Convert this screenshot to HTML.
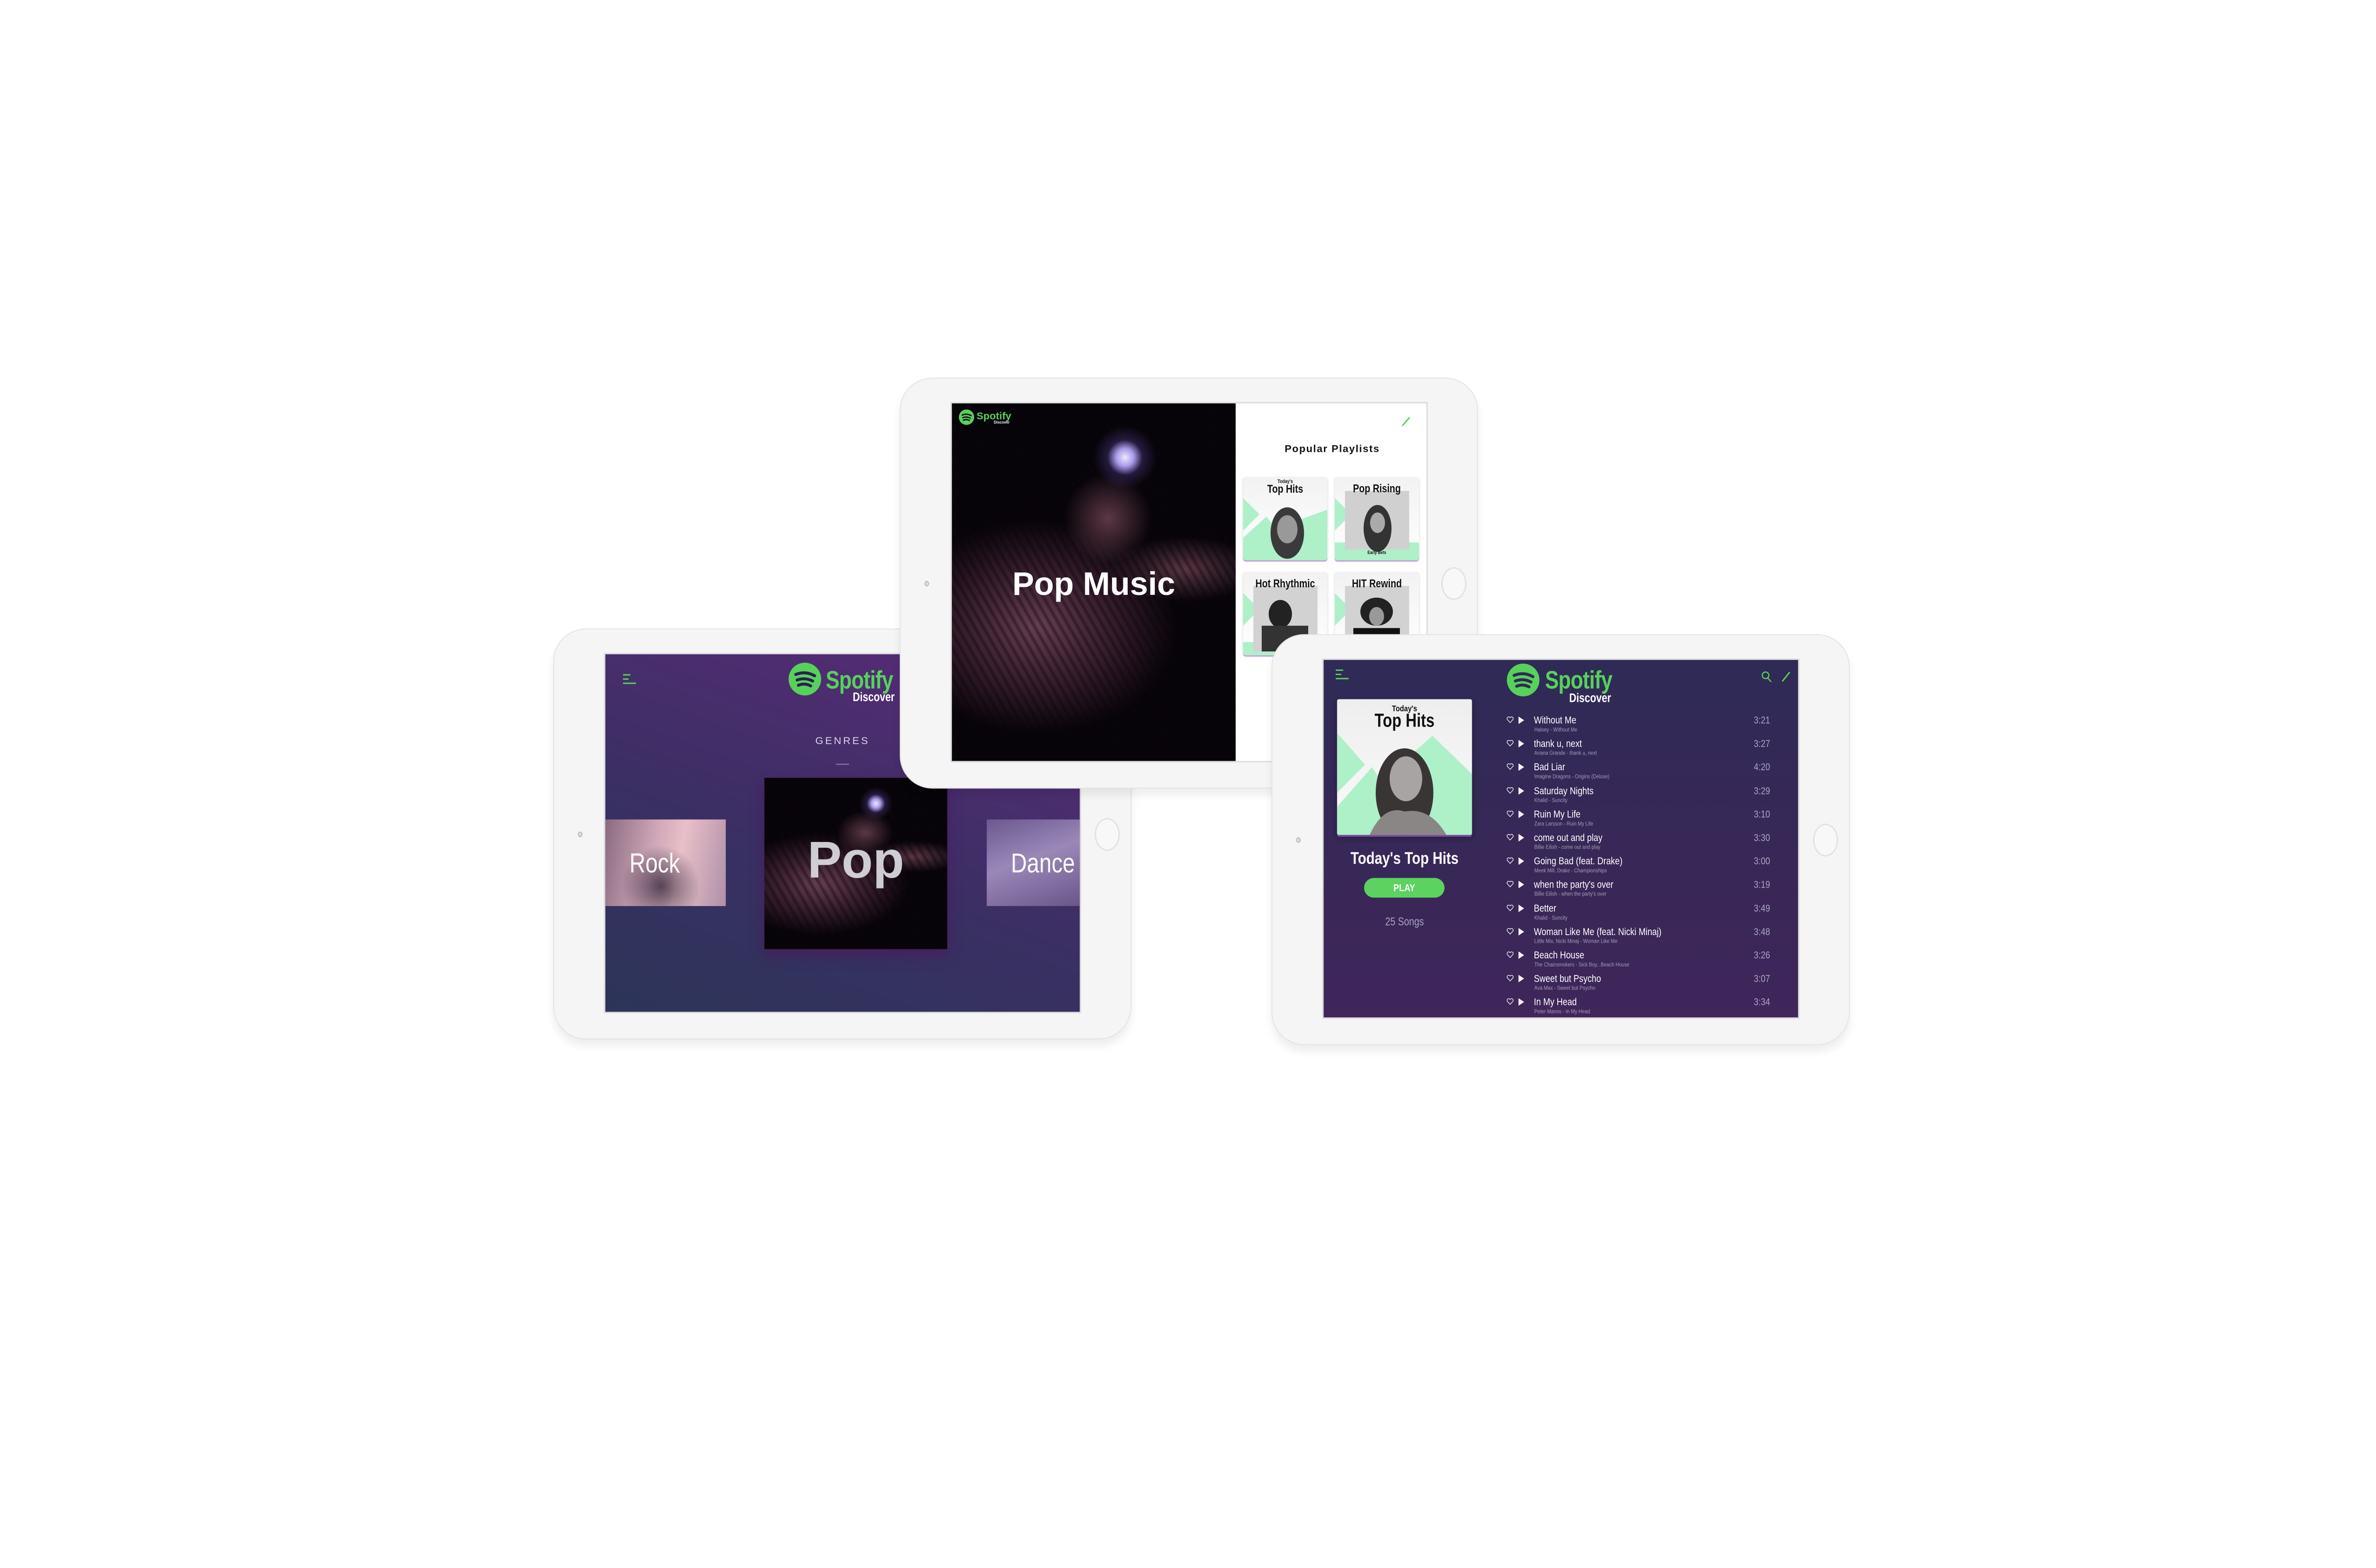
<!DOCTYPE html>
<html><head><meta charset="utf-8"><style>
*{margin:0;padding:0;box-sizing:border-box}
body{width:5100px;height:3300px;background:#fff;position:relative;overflow:hidden;font-family:"Liberation Sans",sans-serif}
#wrap{position:absolute;left:0;top:0;width:5100px;height:3300px;transform-origin:0 0;transform:translate(3px,-6px) scale(0.979,0.985)}
.ipad{position:absolute;width:1243px;height:878px;background:#f5f5f5;border:2px solid #e4e4e4;border-radius:70px;box-shadow:0 14px 18px rgba(0,0,0,.07)}
.screen{position:absolute;left:107px;top:50px;width:1026px;height:770px;border:3px solid #dcdcdc;overflow:hidden}
.home{position:absolute;width:54px;height:70px;border-radius:50%;border:3px solid #e2e2e2;background:#f8f8f8;top:403px}
.cam{position:absolute;width:10px;height:12px;border-radius:50%;border:2px solid #bbb;background:#ddd;top:432px;left:51px}
.a{position:absolute;white-space:nowrap}
.nl{transform:scaleX(.82);transform-origin:0 0}
.nr{transform:scaleX(.82);transform-origin:100% 0}
.nc{transform:scaleX(.82);transform-origin:50% 0}
.photo{background:
 radial-gradient(circle at 61% 15%,#eee8ff 0,#a89ae8 2.5%,rgba(80,60,140,.4) 5%,transparent 9%),
 radial-gradient(ellipse 22% 18% at 55% 32%,rgba(150,90,110,.6),transparent 70%),
 repeating-linear-gradient(60deg,rgba(0,0,0,0) 0,rgba(0,0,0,0) 9px,rgba(10,5,10,.35) 9px,rgba(10,5,10,.35) 16px),
 radial-gradient(ellipse 60% 36% at 30% 62%,rgba(125,75,100,.8),rgba(70,35,55,.55) 55%,transparent 82%),
 radial-gradient(ellipse 35% 12% at 82% 46%,rgba(135,80,100,.65),transparent 75%),
 #070409}
.card{position:absolute;width:181px;height:178px;background:linear-gradient(#f2f2f2,#fff);border-radius:6px;box-shadow:0 3px 0 #c9a0d8,0 2px 5px rgba(0,0,0,.15);overflow:hidden}
.ct{position:absolute;left:0;right:0;text-align:center;font-weight:bold;color:#111;transform:scaleX(.82);transform-origin:50% 0;white-space:nowrap}
.row{position:absolute;left:0;width:580px;height:50px}
.row .t{position:absolute;left:59px;top:0;font-size:22px;color:#fff;white-space:nowrap;transform:scaleX(.82);transform-origin:0 0}
.row .s{position:absolute;left:60px;top:26px;font-size:12.5px;color:#a09cb8;white-space:nowrap;transform:scaleX(.82);transform-origin:0 0}
.row .d{position:absolute;right:13px;top:0;font-size:22px;color:#a8a5c0;transform:scaleX(.82);transform-origin:100% 0}
.row .h{position:absolute;left:0;top:4px;width:16px;height:16px}
.row .p{position:absolute;left:26px;top:5px;width:0;height:0;border-top:8px solid transparent;border-bottom:8px solid transparent;border-left:12px solid #fff}
</style></head><body>
<div id="wrap">

<div class="ipad" style="left:1186px;top:1349px;z-index:1">
 <div class="cam"></div><div class="home" style="left:1162px"></div>
 <div class="screen" style="background:linear-gradient(20deg,#2c3558 0%,#3b2f64 45%,#5a2b78 100%)">
  <svg class="a" style="left:38px;top:42px" width="28" height="22"><g stroke="#57d15b" stroke-width="3"><line x1="0" y1="2" x2="16" y2="2"/><line x1="0" y1="11" x2="12" y2="11"/><line x1="0" y1="20" x2="28" y2="20"/></g></svg>
  <svg class="a" style="left:394px;top:18px" width="70" height="70" viewBox="0 0 100 100"><circle cx="50" cy="50" r="50" fill="#57d15b"/><g fill="none" stroke="#2a2150" stroke-width="9" stroke-linecap="round"><path d="M22 36 Q52 24 80 40"/><path d="M26 53 Q51 44 74 56"/><path d="M30 69 Q50 61 68 71"/></g></svg>
  <div class="a nl" style="left:474px;top:24px;font-size:54px;font-weight:bold;color:#57d15b;letter-spacing:-1px">Spotify</div>
  <div class="a nr" style="left:502px;top:76px;width:120px;text-align:right;font-size:26px;font-weight:bold;color:#fff">Discover</div>
  <div class="a" style="left:0;width:1020px;top:172px;text-align:center;font-size:22px;letter-spacing:4px;color:#d8d4e8">GENRES</div>
  <div class="a" style="left:496px;top:234px;width:28px;height:2px;background:#8a84a8"></div>
  <div class="a" style="left:0;top:353px;width:259px;height:185px;background:linear-gradient(100deg,#8a6a80 0%,#d0a8b8 40%,#e8c0c8 60%,#b090a8 100%);overflow:hidden">
   <div class="a" style="left:20px;top:40px;width:180px;height:170px;background:radial-gradient(ellipse at 55% 60%,rgba(40,30,50,.75),transparent 60%)"></div>
   <div class="a nl" style="left:52px;top:60px;font-size:58px;color:#fff">Rock</div></div>
  <div class="a photo" style="left:342px;top:264px;width:393px;height:366px;box-shadow:0 12px 24px rgba(80,20,90,.6)">
   <div class="a" style="left:0;width:393px;top:112px;text-align:center;font-size:110px;font-weight:bold;color:rgba(225,225,232,.9)">Pop</div></div>
  <div class="a" style="left:820px;top:353px;width:206px;height:185px;background:linear-gradient(160deg,#6a5890,#9a88b8 45%,#6a5488)">
   <div class="a nl" style="left:52px;top:60px;font-size:58px;color:#fff">Dance</div></div>
 </div>
</div>

<div class="ipad" style="left:1931px;top:813px;z-index:2">
 <div class="cam"></div><div class="home" style="left:1162px"></div>
 <div class="screen" style="background:#fff">
  <div class="a photo" style="left:0;top:0;width:610px;height:770px">
   <svg class="a" style="left:15px;top:13px" width="33" height="33" viewBox="0 0 100 100"><circle cx="50" cy="50" r="50" fill="#57d15b"/><g fill="none" stroke="#111" stroke-width="9" stroke-linecap="round"><path d="M22 36 Q52 24 80 40"/><path d="M26 53 Q51 44 74 56"/><path d="M30 69 Q50 61 68 71"/></g></svg>
   <div class="a" style="left:53px;top:14px;font-size:22px;font-weight:bold;color:#57d15b">Spotify</div>
   <div class="a" style="left:70px;top:36px;width:54px;text-align:right;font-size:8px;font-weight:bold;color:#fff">Discover</div>
   <div class="a" style="left:0;width:610px;top:345px;text-align:center;font-size:70px;font-weight:bold;color:#fff">Pop Music</div>
  </div>
  <svg class="a" style="left:966px;top:28px" width="20" height="22"><line x1="2" y1="20" x2="18" y2="2" stroke="#57d15b" stroke-width="3"/></svg>
  <div class="a" style="left:610px;width:415px;top:84px;text-align:center;font-size:22px;font-weight:bold;letter-spacing:1.6px;color:#111">Popular Playlists</div>
  <div class="card" style="left:626px;top:157px">
   <svg class="a" style="left:0;top:0" width="181" height="178"><polygon points="0,45 35,80 0,115" fill="#aef0c8"/><polygon points="0,130 50,85 70,110 181,70 181,178 0,178" fill="#aef0c8"/><ellipse cx="95" cy="120" rx="36" ry="55" fill="#3a3a3a"/><ellipse cx="95" cy="112" rx="22" ry="30" fill="#999"/></svg>
   <div class="ct" style="top:4px;font-size:11px">Today's</div><div class="ct" style="top:13px;font-size:24px">Top Hits</div></div>
  <div class="card" style="left:823px;top:157px">
   <svg class="a" style="left:0;top:0" width="181" height="178"><polygon points="0,45 35,80 0,115" fill="#aef0c8"/><rect x="0" y="140" width="181" height="38" fill="#aef0c8"/><rect x="22" y="30" width="138" height="125" fill="#d0d0d0"/><ellipse cx="92" cy="110" rx="30" ry="50" fill="#333"/><ellipse cx="92" cy="98" rx="16" ry="22" fill="#aaa"/></svg>
   <div class="ct" style="top:12px;font-size:24px">Pop Rising</div><div class="ct" style="top:157px;font-size:10px">Early Bets</div></div>
  <div class="card" style="left:626px;top:360px">
   <svg class="a" style="left:0;top:0" width="181" height="178"><polygon points="0,45 35,80 0,115" fill="#aef0c8"/><rect x="0" y="150" width="181" height="28" fill="#aef0c8"/><rect x="22" y="30" width="138" height="140" fill="#d2d2d2"/><ellipse cx="80" cy="90" rx="25" ry="30" fill="#222"/><rect x="40" y="115" width="100" height="55" fill="#333"/></svg>
   <div class="ct" style="top:12px;font-size:24px">Hot Rhythmic</div></div>
  <div class="card" style="left:823px;top:360px">
   <svg class="a" style="left:0;top:0" width="181" height="178"><polygon points="0,45 35,80 0,115" fill="#aef0c8"/><rect x="0" y="150" width="181" height="28" fill="#aef0c8"/><rect x="22" y="30" width="138" height="140" fill="#d2d2d2"/><ellipse cx="90" cy="85" rx="35" ry="30" fill="#222"/><ellipse cx="90" cy="95" rx="16" ry="20" fill="#999"/><rect x="40" y="120" width="100" height="50" fill="#111"/></svg>
   <div class="ct" style="top:12px;font-size:24px">HIT Rewind</div></div>
 </div>
</div>

<div class="ipad" style="left:2730px;top:1361px;z-index:3">
 <div class="cam"></div><div class="home" style="left:1162px"></div>
 <div class="screen" style="background:linear-gradient(#2f2a56,#3a2758 70%,#40265a)">
  <svg class="a" style="left:26px;top:20px" width="28" height="22"><g stroke="#57d15b" stroke-width="3"><line x1="0" y1="2" x2="16" y2="2"/><line x1="0" y1="11" x2="12" y2="11"/><line x1="0" y1="20" x2="28" y2="20"/></g></svg>
  <svg class="a" style="left:394px;top:8px" width="70" height="70" viewBox="0 0 100 100"><circle cx="50" cy="50" r="50" fill="#57d15b"/><g fill="none" stroke="#2f2a56" stroke-width="9" stroke-linecap="round"><path d="M22 36 Q52 24 80 40"/><path d="M26 53 Q51 44 74 56"/><path d="M30 69 Q50 61 68 71"/></g></svg>
  <div class="a nl" style="left:476px;top:12px;font-size:54px;font-weight:bold;color:#57d15b;letter-spacing:-1px">Spotify</div>
  <div class="a nr" style="left:498px;top:66px;width:120px;text-align:right;font-size:26px;font-weight:bold;color:#fff">Discover</div>
  <svg class="a" style="left:941px;top:24px" width="24" height="26"><circle cx="9" cy="9" r="7" fill="none" stroke="#57d15b" stroke-width="2.5"/><line x1="14" y1="15" x2="21" y2="23" stroke="#57d15b" stroke-width="2.5"/></svg>
  <svg class="a" style="left:984px;top:24px" width="20" height="24"><line x1="2" y1="22" x2="18" y2="2" stroke="#57d15b" stroke-width="3"/></svg>
  <div class="a" style="left:29px;top:84px;width:290px;height:290px;background:linear-gradient(#eee,#fafafa);border-radius:4px;overflow:hidden;box-shadow:0 4px 0 #7a4a9a,0 6px 12px rgba(0,0,0,.3)">
   <svg class="a" style="left:0;top:0" width="290" height="290"><polygon points="0,72 60,140 0,200" fill="#aef0c8"/><polygon points="0,230 75,145 95,175 205,78 290,160 290,290 0,290" fill="#aef0c8"/><ellipse cx="145" cy="200" rx="62" ry="95" fill="#3a3535"/><ellipse cx="148" cy="170" rx="35" ry="48" fill="#a8a4a4"/><path d="M70 290 Q100 225 145 240 Q200 230 235 290Z" fill="#8a8686"/></svg>
   <div class="ct" style="top:10px;font-size:18px">Today's</div><div class="ct" style="top:24px;font-size:40px">Top Hits</div>
  </div>
  <div class="a nc" style="left:0;width:348px;top:403px;text-align:center;font-size:36px;font-weight:bold;color:#fff">Today's Top Hits</div>
  <div class="a" style="left:87px;top:466px;width:173px;height:42px;border-radius:21px;background:#5cd260"></div>
  <div class="a nc" style="left:87px;top:466px;width:173px;line-height:42px;text-align:center;color:#fff;font-size:22px;font-weight:bold">PLAY</div>
  <div class="a nc" style="left:0;width:348px;top:546px;text-align:center;font-size:24px;color:#a7a3bd">25 Songs</div>

  <div class="a" style="left:393px;top:116px;width:580px;height:660px">
   <div class="row" style="top:0"><svg class="h" viewBox="0 0 16 16"><path d="M8 14 L2 7.5 A3.2 3.2 0 0 1 8 3.5 A3.2 3.2 0 0 1 14 7.5 Z" fill="none" stroke="#fff" stroke-width="1.3"/></svg><div class="p"></div><div class="t">Without Me</div><div class="s">Halsey - Without Me</div><div class="d">3:21</div></div>
   <div class="row" style="top:50px"><svg class="h" viewBox="0 0 16 16"><path d="M8 14 L2 7.5 A3.2 3.2 0 0 1 8 3.5 A3.2 3.2 0 0 1 14 7.5 Z" fill="none" stroke="#fff" stroke-width="1.3"/></svg><div class="p"></div><div class="t">thank u, next</div><div class="s">Ariana Grande - thank u, next</div><div class="d">3:27</div></div>
   <div class="row" style="top:100px"><svg class="h" viewBox="0 0 16 16"><path d="M8 14 L2 7.5 A3.2 3.2 0 0 1 8 3.5 A3.2 3.2 0 0 1 14 7.5 Z" fill="none" stroke="#fff" stroke-width="1.3"/></svg><div class="p"></div><div class="t">Bad Liar</div><div class="s">Imagine Dragons - Origins (Deluxe)</div><div class="d">4:20</div></div>
   <div class="row" style="top:151px"><svg class="h" viewBox="0 0 16 16"><path d="M8 14 L2 7.5 A3.2 3.2 0 0 1 8 3.5 A3.2 3.2 0 0 1 14 7.5 Z" fill="none" stroke="#fff" stroke-width="1.3"/></svg><div class="p"></div><div class="t">Saturday Nights</div><div class="s">Khalid - Suncity</div><div class="d">3:29</div></div>
   <div class="row" style="top:201px"><svg class="h" viewBox="0 0 16 16"><path d="M8 14 L2 7.5 A3.2 3.2 0 0 1 8 3.5 A3.2 3.2 0 0 1 14 7.5 Z" fill="none" stroke="#fff" stroke-width="1.3"/></svg><div class="p"></div><div class="t">Ruin My Life</div><div class="s">Zara Larsson - Ruin My Life</div><div class="d">3:10</div></div>
   <div class="row" style="top:251px"><svg class="h" viewBox="0 0 16 16"><path d="M8 14 L2 7.5 A3.2 3.2 0 0 1 8 3.5 A3.2 3.2 0 0 1 14 7.5 Z" fill="none" stroke="#fff" stroke-width="1.3"/></svg><div class="p"></div><div class="t">come out and play</div><div class="s">Billie Eilish - come out and play</div><div class="d">3:30</div></div>
   <div class="row" style="top:301px"><svg class="h" viewBox="0 0 16 16"><path d="M8 14 L2 7.5 A3.2 3.2 0 0 1 8 3.5 A3.2 3.2 0 0 1 14 7.5 Z" fill="none" stroke="#fff" stroke-width="1.3"/></svg><div class="p"></div><div class="t">Going Bad (feat. Drake)</div><div class="s">Meek Mill, Drake - Championships</div><div class="d">3:00</div></div>
   <div class="row" style="top:351px"><svg class="h" viewBox="0 0 16 16"><path d="M8 14 L2 7.5 A3.2 3.2 0 0 1 8 3.5 A3.2 3.2 0 0 1 14 7.5 Z" fill="none" stroke="#fff" stroke-width="1.3"/></svg><div class="p"></div><div class="t">when the party's over</div><div class="s">Billie Eilish - when the party's over</div><div class="d">3:19</div></div>
   <div class="row" style="top:402px"><svg class="h" viewBox="0 0 16 16"><path d="M8 14 L2 7.5 A3.2 3.2 0 0 1 8 3.5 A3.2 3.2 0 0 1 14 7.5 Z" fill="none" stroke="#fff" stroke-width="1.3"/></svg><div class="p"></div><div class="t">Better</div><div class="s">Khalid - Suncity</div><div class="d">3:49</div></div>
   <div class="row" style="top:452px"><svg class="h" viewBox="0 0 16 16"><path d="M8 14 L2 7.5 A3.2 3.2 0 0 1 8 3.5 A3.2 3.2 0 0 1 14 7.5 Z" fill="none" stroke="#fff" stroke-width="1.3"/></svg><div class="p"></div><div class="t">Woman Like Me (feat. Nicki Minaj)</div><div class="s">Little Mix, Nicki Minaj - Woman Like Me</div><div class="d">3:48</div></div>
   <div class="row" style="top:502px"><svg class="h" viewBox="0 0 16 16"><path d="M8 14 L2 7.5 A3.2 3.2 0 0 1 8 3.5 A3.2 3.2 0 0 1 14 7.5 Z" fill="none" stroke="#fff" stroke-width="1.3"/></svg><div class="p"></div><div class="t">Beach House</div><div class="s">The Chainsmokers - Sick Boy...Beach House</div><div class="d">3:26</div></div>
   <div class="row" style="top:552px"><svg class="h" viewBox="0 0 16 16"><path d="M8 14 L2 7.5 A3.2 3.2 0 0 1 8 3.5 A3.2 3.2 0 0 1 14 7.5 Z" fill="none" stroke="#fff" stroke-width="1.3"/></svg><div class="p"></div><div class="t">Sweet but Psycho</div><div class="s">Ava Max - Sweet but Psycho</div><div class="d">3:07</div></div>
   <div class="row" style="top:602px"><svg class="h" viewBox="0 0 16 16"><path d="M8 14 L2 7.5 A3.2 3.2 0 0 1 8 3.5 A3.2 3.2 0 0 1 14 7.5 Z" fill="none" stroke="#fff" stroke-width="1.3"/></svg><div class="p"></div><div class="t">In My Head</div><div class="s">Peter Manos - In My Head</div><div class="d">3:34</div></div>
  </div>
 </div>
</div>
</div>
</body></html>
